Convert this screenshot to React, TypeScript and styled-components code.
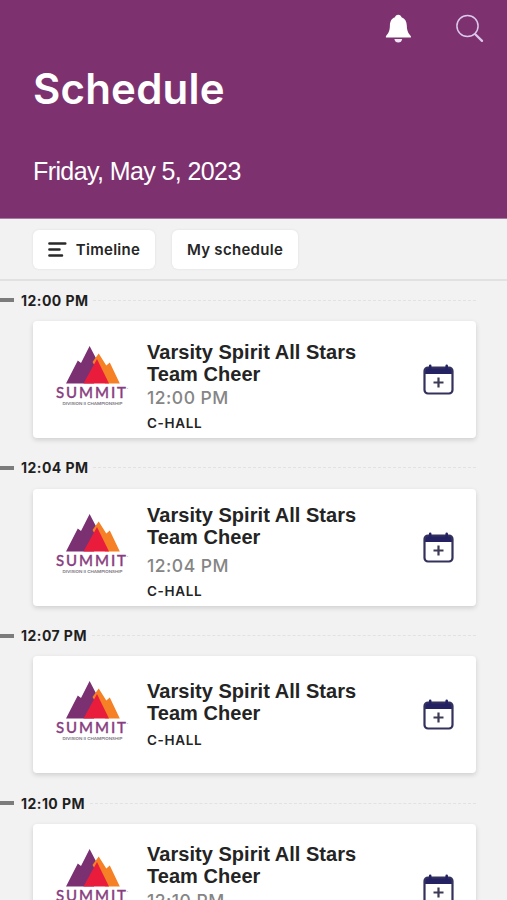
import React from "react";
import styled, { createGlobalStyle } from "styled-components";

const GlobalStyle = createGlobalStyle`
  *, *::before, *::after { box-sizing: border-box; }
  body { margin: 0; background: #f2f2f2; }
`;

const Screen = styled.div`
  width: 507px;
  height: 900px;
  overflow: hidden;
  display: flex;
  flex-direction: column;
  background: #f2f2f2;
  color: #242424;
  font-family: Inter, "Liberation Sans", sans-serif;
`;

const Header = styled.header`
  flex: none;
  height: 219px;
  padding: 14px 23px 0 33px;
  background: #7d326f;
  border-bottom: 1px solid #a77ba0;
  color: #fff;
`;

const HeaderActions = styled.div`
  display: flex;
  justify-content: flex-end;
  gap: 43px;
  height: 30px;
`;

const IconButton = styled.button`
  display: block;
  padding: 0;
  border: 0;
  background: none;
  line-height: 0;
`;

const Title = styled.h1`
  margin: 20px 0 0;
  font-size: 42px;
  font-weight: 600;
  line-height: 50px;
  letter-spacing: 0.2px;
`;

const DateLine = styled.p`
  margin: 43px 0 0;
  font-family: "Liberation Sans", sans-serif;
  font-size: 25px;
  line-height: 28px;
  letter-spacing: -0.6px;
  white-space: nowrap;
`;

const FilterBar = styled.nav`
  flex: none;
  display: flex;
  gap: 17px;
  height: 62px;
  padding: 11px 33px 0;
  border-bottom: 2px solid #e1e1e1;
`;

const FilterButton = styled.button<{ $width: number }>`
  display: flex;
  align-items: center;
  justify-content: center;
  gap: 9px;
  width: ${(p) => p.$width}px;
  height: 39px;
  padding: 0;
  border: 0;
  border-radius: 6px;
  background: #fff;
  box-shadow: 0 0 3px rgba(0, 0, 0, 0.08);
  color: #262626;
  font: 600 15px/20px Inter, sans-serif;
  letter-spacing: 0.3px;
  white-space: nowrap;
`;

const Timeline = styled.main`
  flex: none;
  padding-top: 9px;
`;

const Slot = styled.section`
  height: 167.8px;
`;

const TimeRow = styled.div`
  display: flex;
  align-items: center;
  height: 20px;
  padding-right: 31px;
`;

const Tick = styled.span`
  width: 14px;
  height: 4px;
  margin-right: 7px;
  background: #7c7c7c;
`;

const TimeLabel = styled.span`
  font-size: 14px;
  font-weight: 700;
  letter-spacing: 0.45px;
  color: #1f1f1f;
  white-space: nowrap;
`;

const Rule = styled.span`
  flex: 1;
  margin-left: 5px;
  border-top: 1px dashed #e2e2e2;
`;

const Card = styled.article`
  display: flex;
  height: 117px;
  margin: 10.8px 31px 0 33px;
  padding-left: 22px;
  border-radius: 4px;
  background: #fff;
  box-shadow: 0 2px 5px rgba(0, 0, 0, 0.15);
`;

const Logo = styled.svg`
  flex: none;
  display: block;
  width: 76px;
  height: 64px;
  margin-top: 24px;
`;

const Details = styled.div<{ $top: number }>`
  flex: 1;
  margin-left: 16px;
  padding-top: ${(p) => p.$top}px;
  white-space: nowrap;
`;

const EventName = styled.h2`
  margin: 0;
  font: 700 20px/22px "Liberation Sans", sans-serif;
  letter-spacing: 0.04px;
`;

const EventTime = styled.p<{ $gap: number }>`
  margin: ${(p) => p.$gap}px 0 0;
  font-size: 17.5px;
  font-weight: 500;
  line-height: 24px;
  letter-spacing: 0.5px;
  color: #858585;
`;

const Venue = styled.p<{ $gap: number }>`
  margin: ${(p) => p.$gap}px 0 0;
  font-size: 13.5px;
  font-weight: 600;
  line-height: 18px;
  letter-spacing: 0.65px;
`;

const AddButton = styled(IconButton)<{ $top: number }>`
  flex: none;
  align-self: flex-start;
  margin: ${(p) => p.$top}px 22px 0 0;
`;

const BellIcon = () => (
  <svg width="27" height="30" viewBox="0 0 27 30" fill="#fff">
    <path d="M13.2 0.8c-1.8 0-2.9 1-3.2 2.5C6.500 4.500 5 7.600 4.900 11.500C4.800 17 3.500 19.200 0.900 22.200V23.600H25.900V22.200C23.200 19.200 22 17 21.800 11.500C21.700 7.600 20 4.500 16.500 3.300C16.200 1.800 15 0.800 13.200 0.800Z" />
    <path d="M9.400 25h7.800c-.4 2.400-1.700 3.500-3.900 3.500S9.800 27.400 9.400 25Z" fill="#eee5f5" />
  </svg>
);

const SearchIcon = () => (
  <svg width="29" height="30" viewBox="0 0 29 30" fill="none" stroke="#dcc8ec" strokeLinecap="round">
    <circle cx="12.500" cy="12" r="10.600" strokeWidth="1.500" />
    <path d="M20.300 20.300L27 26.900" strokeWidth="2.300" />
  </svg>
);

const LinesIcon = () => (
  <svg width="19" height="16" viewBox="0 0 19 16" stroke="#292929" strokeWidth="2.500" strokeLinecap="round">
    <path d="M1.400 1.500H17.300M1.400 7.500H11.500M1.400 13.500H14" />
  </svg>
);

const CalendarIcon = () => (
  <svg width="31" height="32" viewBox="0 0 31 32" fill="none">
    <path d="M1.500 10V6.500Q1.500 3.500 4.500 3.500H26.500Q29.500 3.500 29.500 6.500V10Z" fill="#242263" />
    <rect x="1.500" y="3.500" width="28" height="26" rx="3.500" stroke="#34325d" strokeWidth="2.200" />
    <path d="M7.200 1.900V5M23.700 1.900V5" stroke="#242263" strokeWidth="2.600" strokeLinecap="round" />
    <path d="M15.500 13.500V23.500M10.500 18.500H20.500" stroke="#3c3a55" strokeWidth="2.200" />
  </svg>
);

const SummitLogo = () => (
  <Logo viewBox="0 0 76 64">
    <path d="M11 38.500L22.800 15.500L26 18L34.600 1L44 19L39 38.500Z" fill="#7b3072" />
    <path d="M37.500 17L43.700 8.500L51.300 20.500L54.800 17.500L64.800 38.500H50Z" fill="#f58025" />
    <path d="M28.500 38.500L42 14L54 38.500Z" fill="#e91d3b" />
    <text x="1" y="53" textLength="70" lengthAdjust="spacing" fontFamily="Lato, sans-serif" fontSize="15" fontWeight="500" fill="#883d80" stroke="#883d80" strokeWidth="0.35">SUMMIT</text>
    <text x="71.500" y="45" fontFamily="Inter, sans-serif" fontSize="2.500" fill="#883d80">™</text>
    <text x="7.500" y="59.500" textLength="60" lengthAdjust="spacingAndGlyphs" fontFamily="Inter, sans-serif" fontSize="3.400" fontWeight="600" fill="#77737c">DIVISION II CHAMPIONSHIP</text>
  </Logo>
);

type Entry = {
  start: string;
  showTime: boolean;
  top: number;
  timeGap: number;
  venueGap: number;
  iconTop: number;
};

const entries: Entry[] = [
  { start: "12:00 PM", showTime: true, top: 20, timeGap: 1, venueGap: 4, iconTop: 43 },
  { start: "12:04 PM", showTime: true, top: 15, timeGap: 6, venueGap: 4, iconTop: 43 },
  { start: "12:07 PM", showTime: false, top: 24, timeGap: 0, venueGap: 7, iconTop: 43 },
  { start: "12:10 PM", showTime: true, top: 19, timeGap: 2, venueGap: 4, iconTop: 50 },
];

export default function App() {
  return (
    <>
      <GlobalStyle />
      <Screen>
        <Header>
          <HeaderActions>
            <IconButton aria-label="Notifications"><BellIcon /></IconButton>
            <IconButton aria-label="Search"><SearchIcon /></IconButton>
          </HeaderActions>
          <Title>Schedule</Title>
          <DateLine>Friday, May 5, 2023</DateLine>
        </Header>
        <FilterBar>
          <FilterButton $width={122}><LinesIcon />Timeline</FilterButton>
          <FilterButton $width={126}>My schedule</FilterButton>
        </FilterBar>
        <Timeline>
          {entries.map((e) => (
            <Slot key={e.start}>
              <TimeRow>
                <Tick />
                <TimeLabel>{e.start}</TimeLabel>
                <Rule />
              </TimeRow>
              <Card>
                <SummitLogo />
                <Details $top={e.top}>
                  <EventName>Varsity Spirit All Stars<br />Team Cheer</EventName>
                  {e.showTime && <EventTime $gap={e.timeGap}>{e.start}</EventTime>}
                  <Venue $gap={e.venueGap}>C-HALL</Venue>
                </Details>
                <AddButton $top={e.iconTop} aria-label="Add to my schedule"><CalendarIcon /></AddButton>
              </Card>
            </Slot>
          ))}
        </Timeline>
      </Screen>
    </>
  );
}
